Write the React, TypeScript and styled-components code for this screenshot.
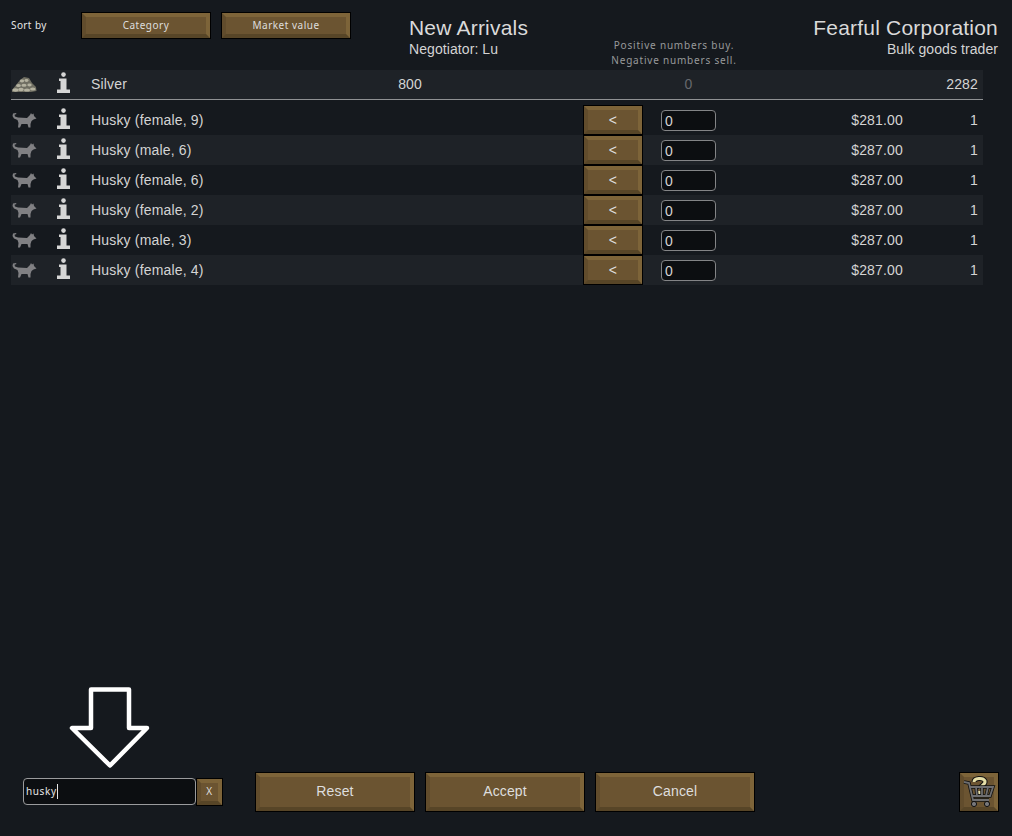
import styled, { createGlobalStyle } from "styled-components";

const GlobalStyle = createGlobalStyle`
  html, body {
    margin: 0;
    padding: 0;
    background: #15191e;
  }
  * {
    box-sizing: border-box;
  }
`;

const tinyFont = `"Noto Sans", "DejaVu Sans", sans-serif`;
const mainFont = `"Liberation Sans", Arial, sans-serif`;

const Page = styled.div`
  width: 1012px;
  height: 836px;
  display: flex;
  flex-direction: column;
  background: #15191e;
  color: #d4d4d4;
  font-family: ${mainFont};
  overflow: hidden;
`;

const Header = styled.header`
  height: 70px;
  display: grid;
  grid-template-columns: 409px 151px 228px 1fr;
`;

const SortBar = styled.div`
  display: flex;
  align-items: flex-start;
  gap: 10px;
  padding: 12px 0 0 11px;
`;

const SortLabel = styled.span`
  width: 60px;
  font: 10px/26px ${tinyFont};
  letter-spacing: 0.4px;
  color: #e6e6e6;
`;

const BevelButton = styled.button<{ $w: number; $h: number; $tiny?: boolean }>`
  width: ${(p) => p.$w}px;
  height: ${(p) => p.$h}px;
  flex: none;
  padding: 0 0 2px;
  background: #6b5431;
  border-style: solid;
  border-width: 4px;
  border-color: #7d6439 #7d6439 #574527 #614c2c;
  box-shadow: 0 0 0 1px #000;
  color: #dedede;
  font: ${(p) => (p.$tiny ? `10px ${tinyFont}` : `14px ${mainFont}`)};
  letter-spacing: ${(p) => (p.$tiny ? "0.5px" : "0.15px")};
`;

const SortButton = styled(BevelButton)`
  margin: 1px;
`;

const TitleBlock = styled.div<{ $right?: boolean }>`
  padding: 16px ${(p) => (p.$right ? "14px" : "0")} 0 0;
  text-align: ${(p) => (p.$right ? "right" : "left")};
`;

const Title = styled.div`
  font-size: 21px;
  line-height: 23px;
  letter-spacing: 0.2px;
  color: #dadada;
`;

const Subtitle = styled.div`
  font-size: 14px;
  line-height: 20px;
  letter-spacing: 0.08px;
  color: #d4d4d4;
`;

const Hint = styled.div`
  padding-top: 38px;
  text-align: center;
  font: 10px/15px ${tinyFont};
  letter-spacing: 0.8px;
  color: #98999b;
`;

const Row = styled.div<{ $shaded?: boolean; $currency?: boolean }>`
  width: 972px;
  margin-left: 11px;
  height: 30px;
  padding-bottom: ${(p) => (p.$currency ? "1px" : "0")};
  display: grid;
  grid-template-columns: 26px 54px 200px 131px 161px 60px 18px 55px 187px 75px;
  align-items: center;
  font-size: 14px;
  letter-spacing: 0.17px;
  color: #d4d4d4;
  background: ${(p) => (p.$shaded ? "#1e2227" : "transparent")};
  border-bottom: ${(p) => (p.$currency ? "1px solid #8f9193" : "none")};
`;

const Rows = styled.div`
  margin-top: 5px;
`;

const IconCell = styled.div`
  display: flex;
  justify-content: center;
  align-items: center;
  height: 100%;
`;

const InfoCell = styled(IconCell)`
  padding: 0 1px 3px 0;
`;

const Amount = styled.span`
  text-align: right;
`;

const Muted = styled.span`
  text-align: center;
  color: #66696d;
`;

const ArrowButton = styled(BevelButton)`
  justify-self: center;
  padding: 0;
`;

const QtyInput = styled.input`
  width: 55px;
  height: 21px;
  padding: 2px 3px 0;
  background: #0c0e11;
  border: 1px solid #838486;
  border-radius: 4px;
  outline: none;
  color: #d4d4d4;
  font: 14px ${mainFont};
`;

const Footer = styled.footer`
  margin-top: auto;
  height: 40px;
  margin-bottom: 24px;
  display: flex;
  align-items: center;
  padding: 0 14px 0 23px;
`;

const SearchWrap = styled.div`
  position: relative;
  display: flex;
  align-items: center;
  gap: 1px;
  margin: 0 34px 1px 0;
`;

const SearchBox = styled.div`
  width: 173px;
  height: 27px;
  display: flex;
  align-items: center;
  padding: 0 2px 1px;
  background: #0c0e11;
  border: 1px solid #9a9b9d;
  border-radius: 4px;
  font: 10px ${tinyFont};
  letter-spacing: 0.6px;
  color: #e6e6e6;
`;

const Caret = styled.span`
  width: 1px;
  height: 15px;
  background: #e6e6e6;
`;

const PointerArrow = styled.svg`
  position: absolute;
  left: 46px;
  bottom: calc(100% + 9px);
`;

const Actions = styled.div`
  display: flex;
  gap: 12px;
`;

const CartButton = styled(BevelButton)`
  margin-left: auto;
  position: relative;
  overflow: visible;
`;

const CartSvg = styled.svg`
  position: absolute;
  left: -5px;
  top: -5px;
`;

const SilverIcon = () => (
  <svg width="26" height="17" viewBox="0 0 26 17">
    <path d="M1 14 L5 9 L9 4 L13 1 L18 2 L21 7 L25 11 L25.5 15 L20 16 L6 16 L1 16 Z" fill="#6f6e62" />
    <g fill="#b4b2a0">
      <ellipse cx="4.5" cy="14" rx="3" ry="1.7" />
      <ellipse cx="10" cy="13.5" rx="2.8" ry="1.7" />
      <ellipse cx="16" cy="14" rx="3" ry="1.6" />
      <ellipse cx="21.8" cy="13" rx="2.8" ry="1.6" />
      <ellipse cx="7.5" cy="9.5" rx="2.4" ry="1.5" />
      <ellipse cx="13" cy="9.2" rx="2.6" ry="1.5" />
      <ellipse cx="18.5" cy="9" rx="2.2" ry="1.4" />
      <ellipse cx="11" cy="5" rx="2.2" ry="1.4" />
      <ellipse cx="15.5" cy="4.5" rx="2" ry="1.4" />
    </g>
  </svg>
);

const HuskyIcon = () => (
  <svg width="25" height="16" viewBox="0 0 25 16">
    <path
      d="M1 1.5 L4 1 L4.5 2 L2.5 2.8 L3 4.5 L6 5.5 L15 6 L18 3 L19 1 L20 2.5 L21.5 1.5 L22 4 L24.5 6.5 L21.5 7.5 L19.5 9 L18.5 12 L18.5 15.5 L16.5 15.5 L15.5 12 L9.5 12 L8 15.5 L6 15.5 L6.5 11 L5.5 8 L2 6.5 L0.5 4 Z"
      fill="#808083"
    />
  </svg>
);

const InfoIcon = () => (
  <svg width="13" height="21" viewBox="0 0 13 21">
    <circle cx="6.5" cy="2.6" r="2.3" fill="#d6d6d6" />
    <path d="M2 6.5 H9.5 V17.5 H13 V21 H0 V17.5 H3.5 V9 H2 Z" fill="#d6d6d6" />
  </svg>
);

const CartIcon = () => (
  <CartSvg width="40" height="40" viewBox="0 0 40 40">
    <path d="M15 10 C15 6 24 5 26 9 C27 13 21 13 21 17" fill="none" stroke="#111" strokeWidth="5" />
    <path d="M15 10 C15 6 24 5 26 9 C27 13 21 13 21 17" fill="none" stroke="#e6dfa8" strokeWidth="3" />
    <rect x="19" y="19" width="4" height="3" fill="#e6dfa8" />
    <path
      d="M5 10 L10 11 L14 28 L30 28 M11 15 L34 15 L31 24 L13 24 M17 15 L18 24 M23 15 L23 24 M29 15 L27 24"
      fill="none"
      stroke="#111"
      strokeWidth="3.4"
    />
    <path
      d="M5 10 L10 11 L14 28 L30 28 M11 15 L34 15 L31 24 L13 24 M17 15 L18 24 M23 15 L23 24 M29 15 L27 24"
      fill="none"
      stroke="#6e6e70"
      strokeWidth="1.8"
    />
    <circle cx="15" cy="32" r="2.6" fill="#77777a" stroke="#111" />
    <circle cx="28" cy="32" r="2.6" fill="#77777a" stroke="#111" />
  </CartSvg>
);

const huskies = [
  { name: "Husky (female, 9)", price: "$281.00" },
  { name: "Husky (male, 6)", price: "$287.00" },
  { name: "Husky (female, 6)", price: "$287.00" },
  { name: "Husky (female, 2)", price: "$287.00" },
  { name: "Husky (male, 3)", price: "$287.00" },
  { name: "Husky (female, 4)", price: "$287.00" },
];

export default function App() {
  return (
    <Page>
      <GlobalStyle />
      <Header>
        <SortBar>
          <SortLabel>Sort by</SortLabel>
          <SortButton $w={128} $h={25} $tiny>
            Category
          </SortButton>
          <SortButton $w={128} $h={25} $tiny>
            Market value
          </SortButton>
        </SortBar>
        <TitleBlock>
          <Title>New Arrivals</Title>
          <Subtitle>Negotiator: Lu</Subtitle>
        </TitleBlock>
        <Hint>
          Positive numbers buy.
          <br />
          Negative numbers sell.
        </Hint>
        <TitleBlock $right>
          <Title>Fearful Corporation</Title>
          <Subtitle>Bulk goods trader</Subtitle>
        </TitleBlock>
      </Header>

      <Row $shaded $currency>
        <IconCell>
          <SilverIcon />
        </IconCell>
        <InfoCell>
          <InfoIcon />
        </InfoCell>
        <span>Silver</span>
        <Amount>800</Amount>
        <span />
        <span />
        <span />
        <Muted>0</Muted>
        <span />
        <Amount>2282</Amount>
      </Row>

      <Rows>
        {huskies.map((h, i) => (
          <Row key={i} $shaded={i % 2 === 1}>
            <IconCell>
              <HuskyIcon />
            </IconCell>
            <InfoCell>
              <InfoIcon />
            </InfoCell>
            <span>{h.name}</span>
            <span />
            <span />
            <ArrowButton $w={58} $h={28}>
              &lt;
            </ArrowButton>
            <span />
            <QtyInput readOnly value="0" />
            <Amount>{h.price}</Amount>
            <Amount>1</Amount>
          </Row>
        ))}
      </Rows>

      <Footer>
        <SearchWrap>
          <SearchBox>
            husky
            <Caret />
          </SearchBox>
          <BevelButton $w={25} $h={26} $tiny>
            X
          </BevelButton>
          <PointerArrow width="82" height="82" viewBox="0 0 82 82">
            <path
              d="M22 2.5 H60 V41 H78 L41 78.5 L3 41 H22 Z"
              fill="none"
              stroke="#fff"
              strokeWidth="4.5"
              strokeLinejoin="round"
            />
          </PointerArrow>
        </SearchWrap>
        <Actions>
          <BevelButton $w={158} $h={38}>
            Reset
          </BevelButton>
          <BevelButton $w={158} $h={38}>
            Accept
          </BevelButton>
          <BevelButton $w={158} $h={38}>
            Cancel
          </BevelButton>
        </Actions>
        <CartButton $w={38} $h={38}>
          <CartIcon />
        </CartButton>
      </Footer>
    </Page>
  );
}
